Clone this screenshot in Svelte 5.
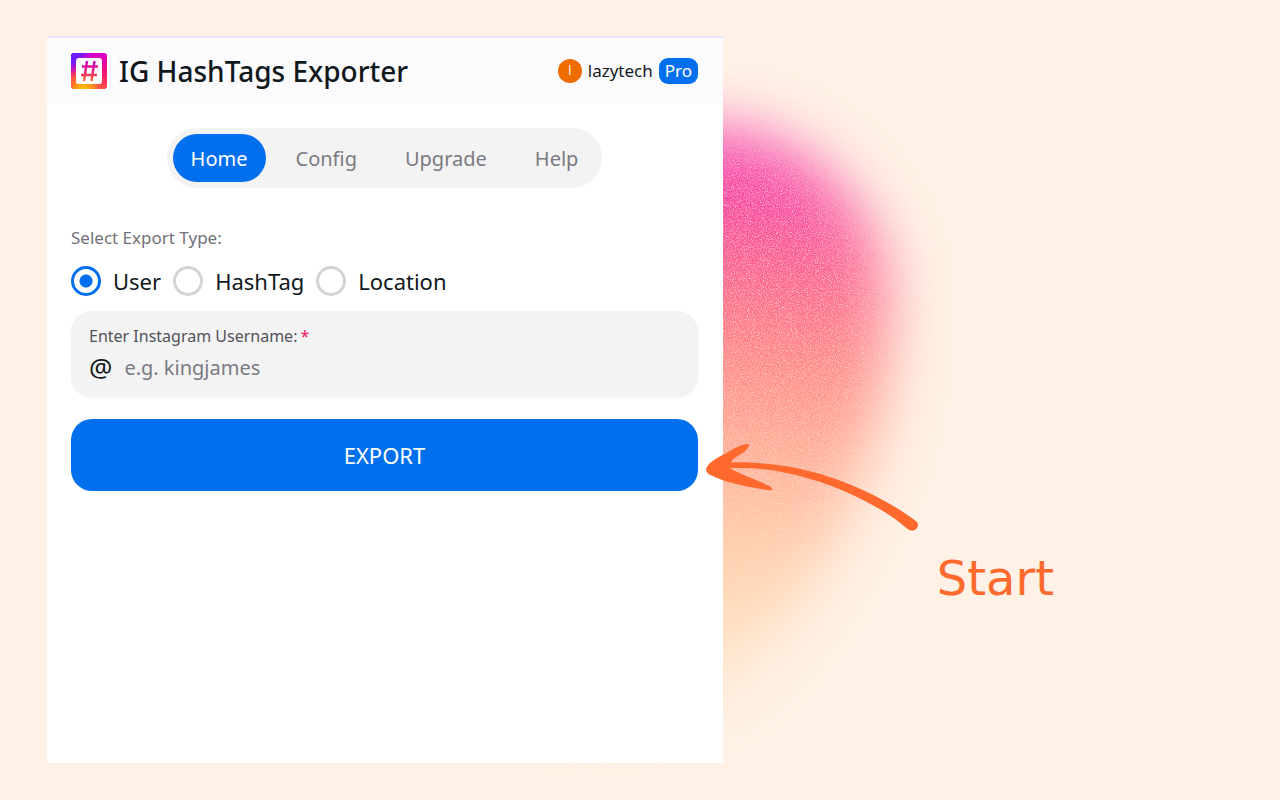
<script lang="ts">
  // Extension popup on a promo backdrop, with a hand-drawn callout
  // pointing at the export button.

  const tabs = ['Home', 'Config', 'Upgrade', 'Help'];
  const exportTypes = ['User', 'HashTag', 'Location'];

  let activeTab = $state('Home');
  let exportType = $state('User');
  let username = $state('');
</script>

<main>
  <!-- Soft grainy blob behind the popup. -->
  <svg class="blob" viewBox="0 0 1280 800" preserveAspectRatio="xMinYMin slice" aria-hidden="true">
    <defs>
      <linearGradient id="blob-fill" gradientUnits="userSpaceOnUse" x1="760" y1="120" x2="720" y2="700">
        <stop offset="0" stop-color="#f83db6" />
        <stop offset="0.12" stop-color="#f644a4" />
        <stop offset="0.24" stop-color="#fa5f92" />
        <stop offset="0.36" stop-color="#fd7b86" />
        <stop offset="0.5" stop-color="#ff9585" stop-opacity="0.92" />
        <stop offset="0.64" stop-color="#ffae8e" stop-opacity="0.78" />
        <stop offset="0.8" stop-color="#ffc493" stop-opacity="0.6" />
        <stop offset="1" stop-color="#ffd8ac" stop-opacity="0.3" />
      </linearGradient>
      <filter id="grain" filterUnits="userSpaceOnUse" x="400" y="0" width="700" height="800" color-interpolation-filters="sRGB">
        <feGaussianBlur in="SourceGraphic" stdDeviation="29" result="soft" />
        <feTurbulence type="fractalNoise" baseFrequency="0.93" numOctaves="4" seed="4" />
        <feColorMatrix values="0 0 0 0 1  0 0 0 0 0.93  0 0 0 0 0.88  1.6 0 0 0 -0.68" />
        <feComposite in2="soft" operator="in" result="specks" />
        <feMerge>
          <feMergeNode in="soft" />
          <feMergeNode in="specks" />
        </feMerge>
      </filter>
    </defs>
    <path
      filter="url(#grain)"
      fill="url(#blob-fill)"
      d="M560 180 C600 140 650 130 710 130 C800 130 885 215 885 300 C885 430 850 560 720 690 L560 720 Z"
    />
  </svg>

  <section class="popup">
    <header>
      <svg class="logo" viewBox="0 0 36 36" aria-hidden="true">
        <defs>
          <linearGradient id="ig-base" x1="0" y1="0" x2="0" y2="1">
            <stop offset="0" stop-color="#d600d0" />
            <stop offset="0.5" stop-color="#f0107c" />
            <stop offset="1" stop-color="#ff4a48" />
          </linearGradient>
          <radialGradient id="ig-violet" cx="0" cy="0" r="0.65">
            <stop offset="0" stop-color="#5a1cff" />
            <stop offset="0.45" stop-color="#7a18f8" />
            <stop offset="1" stop-color="#c400e0" stop-opacity="0" />
          </radialGradient>
          <radialGradient id="ig-yellow" cx="0.35" cy="1" r="0.65">
            <stop offset="0" stop-color="#ffc60a" />
            <stop offset="0.4" stop-color="#ff8a1c" />
            <stop offset="1" stop-color="#ff4a48" stop-opacity="0" />
          </radialGradient>
          <linearGradient id="ig-hash" gradientUnits="userSpaceOnUse" x1="18" y1="8" x2="18" y2="28">
            <stop offset="0" stop-color="#c800c4" />
            <stop offset="0.5" stop-color="#e8207c" />
            <stop offset="1" stop-color="#ff6a2c" />
          </linearGradient>
        </defs>
        <rect width="36" height="36" rx="3" fill="url(#ig-base)" />
        <rect width="36" height="36" rx="3" fill="url(#ig-violet)" />
        <rect width="36" height="36" rx="3" fill="url(#ig-yellow)" />
        <rect x="5" y="5" width="26" height="26" rx="3" fill="#fff" />
        <path d="M16 8 L13 28 M23.500 8 L20.500 28 M11 13.500 H27 M10 22 H26" fill="none" stroke="url(#ig-hash)" stroke-width="2.400" />
      </svg>
      <h1>IG HashTags Exporter</h1>
      <div class="account">
        <span class="avatar">l</span>
        <span>lazytech</span>
        <span class="plan">Pro</span>
      </div>
    </header>

    <div class="body">
      <nav>
        {#each tabs as tab}
          <button type="button" class:active={tab === activeTab} onclick={() => (activeTab = tab)}>{tab}</button>
        {/each}
      </nav>

      <form onsubmit={(e) => e.preventDefault()}>
        <fieldset>
          <legend>Select Export Type:</legend>
          <div class="radios">
            {#each exportTypes as type}
              <label>
                <input type="radio" name="export-type" value={type} bind:group={exportType} />
                {type}
              </label>
            {/each}
          </div>
        </fieldset>

        <div class="field">
          <label for="username">Enter Instagram Username:<span class="required">*</span></label>
          <div class="entry">
            <span class="at">@</span>
            <input id="username" type="text" placeholder="e.g. kingjames" bind:value={username} />
          </div>
        </div>

        <div class="submit">
          <button type="submit">EXPORT</button>
          <div class="callout">
            <svg viewBox="48 38 639 267" aria-hidden="true">
              <path
                fill="#ff692e"
                d="M50 111 C60 90 98 75 125 59 C145 47 165 40 176 41 C179 45 172 60 158 68 C145 76 130 84 123 96
                   C330 92 470 155 560 199 C610 226 650 250 680 274 C689 284 681 297 672 300 C662 302 655 298 648 292
                   C600 250 540 218 480 190 C380 145 240 105 118 114 C160 135 215 155 240 168 C246 172 248 178 246 180
                   C190 175 100 155 70 138 C52 132 45 123 50 111 Z"
              />
            </svg>
            <p>Start</p>
          </div>
        </div>
      </form>
    </div>
  </section>
</main>

<style>
  :global(body) {
    margin: 0;
  }

  main {
    position: relative;
    display: flex;
    box-sizing: border-box;
    min-height: 100vh;
    padding: 36px 47px 37px;
    overflow: hidden;
    background: #fff1e5;
    color: #11181c;
    font-family: 'Noto Sans', 'Open Sans', sans-serif;
  }

  .blob {
    position: absolute;
    inset: 0;
    width: 100%;
    height: 100%;
  }

  .popup {
    position: relative;
    flex: 0 0 57%;
    border-top: 2px solid #ebe6fb;
    background: #fff;
  }

  header {
    display: flex;
    align-items: center;
    gap: 12px;
    height: 66px;
    padding: 0 25px 0 24px;
    background: #fbfbfe;
  }
  .logo {
    width: 36px;
    height: 36px;
  }
  h1 {
    margin: 0;
    font-size: 28px;
    font-weight: 500;
    line-height: 40px;
    white-space: nowrap;
  }

  .account {
    display: flex;
    align-items: center;
    gap: 6px;
    margin-left: auto;
    font-size: 17px;
    line-height: 26px;
  }
  .avatar {
    width: 24px;
    border-radius: 50%;
    background: #ef6c00;
    color: #fff;
    font-size: 12px;
    line-height: 24px;
    text-align: center;
  }
  .plan {
    padding: 0 6px;
    border-radius: 9px;
    background: #006fee;
    color: #fff;
  }

  .body {
    padding: 24px 25px 24px 24px;
  }

  nav {
    display: flex;
    gap: 12px;
    width: fit-content;
    margin: 0 auto 36px;
    padding: 6px;
    border-radius: 30px;
    background: #f3f3f3;
  }
  nav button {
    height: 48px;
    padding: 0 18px;
    border: 0;
    border-radius: 24px;
    background: none;
    color: #7a7a82;
    font: inherit;
    font-size: 20px;
    cursor: pointer;
  }
  nav button.active {
    background: #006fee;
    color: #fff;
  }

  fieldset {
    margin: 0;
    padding: 0;
    border: 0;
  }
  legend {
    padding: 0;
    color: #71717a;
    font-size: 17px;
    line-height: 27px;
  }
  .radios {
    display: flex;
    gap: 12px;
    padding: 12px 0;
  }
  .radios label {
    display: flex;
    align-items: center;
    gap: 12px;
    font-size: 22px;
    line-height: 36px;
  }
  .radios input {
    appearance: none;
    width: 30px;
    height: 30px;
    margin: 0;
    border: 3px solid #d4d4d8;
    border-radius: 50%;
  }
  .radios input:checked {
    border-color: #006fee;
    background: radial-gradient(circle, #006fee 6px, transparent 7px);
  }

  .field {
    margin-bottom: 22px;
    padding: 12px 18px;
    border-radius: 21px;
    background: #f3f3f3;
    box-shadow: 0 1px 2px rgba(0, 0, 0, 0.05);
  }
  .field label {
    display: block;
    color: #52525b;
    font-size: 16px;
    line-height: 26px;
  }
  .required {
    margin-left: 3px;
    color: #f31260;
  }
  .entry {
    display: flex;
    align-items: center;
    gap: 12px;
  }
  .at {
    font-size: 26px;
    line-height: 36px;
  }
  .entry input {
    flex: 1;
    min-width: 0;
    padding: 0;
    border: 0;
    outline: 0;
    background: none;
    color: inherit;
    font: inherit;
    font-size: 20px;
  }
  .entry input::placeholder {
    color: #7a7a82;
  }

  .submit {
    position: relative;
  }
  .submit button {
    width: 100%;
    height: 72px;
    border: 0;
    border-radius: 21px;
    background: #006fee;
    color: #fff;
    font: inherit;
    font-size: 22px;
    cursor: pointer;
  }

  /* Arrow and caption hang off the right end of the button. */
  .callout {
    position: absolute;
    top: 24px;
    left: 100%;
    width: 348px;
    padding-left: 8px;
    color: #ff692e;
    pointer-events: none;
  }
  .callout svg {
    display: block;
    width: 213px;
  }
  .callout p {
    margin: 16px 0 0;
    font-family: 'DejaVu Sans', sans-serif;
    font-size: 48px;
    line-height: 60px;
    text-align: right;
  }
</style>
